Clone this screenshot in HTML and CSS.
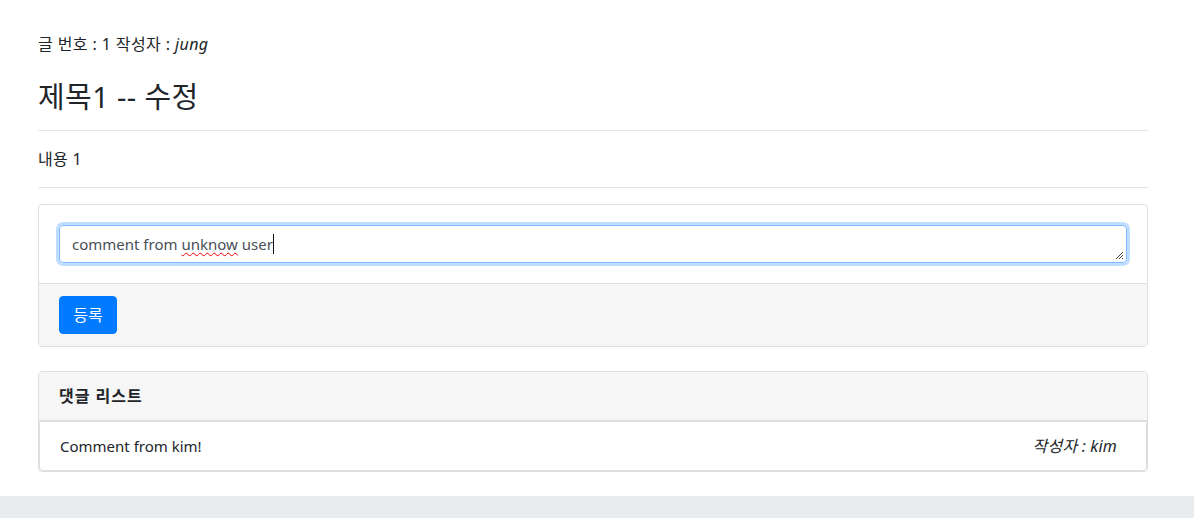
FILE: index.html
```html
<!DOCTYPE html>
<html lang="ko">
<head>
<meta charset="utf-8">
<title>글 상세</title>
<link rel="stylesheet" href="styles.css">
</head>
<body>
<main class="container">
  <div class="meta">글 번호 : 1 작성자 : <i>jung</i></div>
  <h3 class="title">제목1 -- 수정</h3>
  <hr class="rule">
  <div class="content">내용 1</div>
  <hr class="rule">

  <div class="card">
    <div class="card-body">
      <div class="fake-textarea">
        <span>comment from </span><span class="misspelled">unknow</span><span> user</span><span class="caret"></span>
        <svg class="grip" width="9" height="9" viewBox="0 0 9 9"><path d="M8 1 L1 8 M8 4 L4 8 M8 7 L7 8" stroke="#444" stroke-width="1" fill="none"/></svg>
      </div>
    </div>
    <div class="card-footer">
      <button class="btn">등록</button>
    </div>
  </div>

  <div class="card list-card">
    <div class="card-header">댓글 리스트</div>
    <ul class="list-group">
      <li class="list-item">
        <span class="comment">Comment from kim!</span>
        <span class="author"><i>작성자 : kim</i></span>
      </li>
    </ul>
  </div>
</main>
<footer class="page-footer"></footer>
</body>
</html>
```

FILE: styles.css
```css
html, body {
  margin: 0;
  padding: 0;
}
body {
  font-family: "Noto Sans", "Noto Sans CJK KR", sans-serif;
  font-size: 16px;
  line-height: 1.5;
  color: #212529;
  background: #fff;
}
.container {
  width: 1110px;
  margin-left: 38px;
  padding-top: 32px;
}
.meta {
  font-size: 16px;
  line-height: 24px;
  letter-spacing: 0.4px;
  margin-bottom: 24px;
}
.title {
  font-size: 29px;
  font-weight: 400;
  line-height: 34px;
  letter-spacing: 0.4px;
  margin: 0 0 16px;
}
.rule {
  border: 0;
  border-top: 1px solid #e5e5e5;
  margin: 0 0 16px;
}
.content {
  font-size: 16px;
  line-height: 24px;
  letter-spacing: 0.3px;
  margin-bottom: 16px;
}
.card {
  border: 1px solid #dedede;
  border-radius: 4px;
  background: #fff;
  margin-bottom: 24px;
}
.card-body {
  padding: 20px;
}
.fake-textarea {
  position: relative;
  height: 38px;
  box-sizing: border-box;
  border: 1px solid #80bdff;
  border-radius: 4px;
  box-shadow: 0 0 0 3px rgba(0, 123, 255, 0.25);
  padding: 6px 12px;
  font-size: 15px;
  color: #495057;
  display: flex;
  align-items: center;
}
.fake-textarea span {
  white-space: pre;
}
.misspelled {
  text-decoration: underline wavy #e00;
  text-decoration-thickness: 1px;
  text-underline-offset: 2px;
}
.caret {
  display: inline-block;
  width: 1px;
  height: 20px;
  background: #111;
}
.grip {
  position: absolute;
  right: 2px;
  bottom: 2px;
}
.card-footer {
  background: #f6f6f6;
  border-top: 1px solid #dedede;
  padding: 12px 20px;
}
.btn {
  font-family: inherit;
  font-size: 16px;
  line-height: 24px;
  color: #fff;
  background: #007bff;
  border: 1px solid #007bff;
  border-radius: 4px;
  padding: 6px 12px;
  height: 38px;
  width: 58px;
}
.card-header {
  background: #f6f6f6;
  border-bottom: 1px solid #dedede;
  padding: 12px 20px;
  font-size: 16px;
  line-height: 24px;
  font-weight: 700;
  letter-spacing: 1px;
}
.list-group {
  list-style: none;
  margin: 0;
  padding: 0;
}
.list-item {
  display: flex;
  justify-content: space-between;
  align-items: center;
  border: 1px solid #dedede;
  border-radius: 0 0 4px 4px;
  padding: 12px 29px 12px 20px;
  line-height: 24px;
}
.comment {
  font-size: 15px;
}
.author {
  font-size: 16px;
  letter-spacing: 0.2px;
}
.page-footer {
  height: 40px;
  background: #e9ecef;
}
```
